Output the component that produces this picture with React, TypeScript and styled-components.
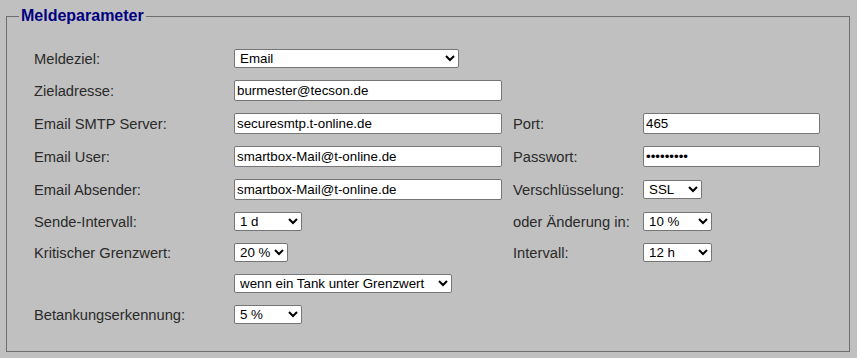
import React from "react";
import styled, { createGlobalStyle } from "styled-components";

const Global = createGlobalStyle`
  html, body { margin: 0; padding: 0; background: #c0c0c0; }
  body { font-family: "Liberation Sans", Arial, sans-serif; }
`;

const Page = styled.div`
  width: 857px;
  height: 358px;
  box-sizing: border-box;
  padding: 7px 7px 0 6px;
  background: #c0c0c0;
`;

const Fieldset = styled.fieldset`
  margin: 0;
  height: 345px;
  box-sizing: border-box;
  border: 1px solid #6e6e6e;
  padding: 18px 0 0 27px;
`;

const Legend = styled.legend`
  margin-left: -15px;
  padding: 0 2px;
  font-size: 16px;
  font-weight: bold;
  color: #000080;
  line-height: 18px;
`;

const Row = styled.div`
  display: grid;
  grid-template-columns: 200px 279px 130px 1fr;
  align-items: center;
  padding: 6px 0;
`;

const Label = styled.span`
  font-size: 14.7px;
  color: #2a2a2a;
  white-space: nowrap;
`;

const TextInput = styled.input<{ $w: number }>`
  width: ${(p) => p.$w}px;
  height: 21px;
  box-sizing: border-box;
  border: 1px solid #767676;
  border-radius: 2px;
  background: #fff;
  padding: 1px 2px;
  font-family: "Liberation Sans", Arial, sans-serif;
  font-size: 13.33px;
  color: #000;
  outline: none;
`;

const Select = styled.select<{ $w: number }>`
  width: ${(p) => p.$w}px;
  height: 19px;
  box-sizing: border-box;
  border: 1px solid #767676;
  border-radius: 2px;
  background: #fff;
  padding: 0 0 0 1px;
  font-family: "Liberation Sans", Arial, sans-serif;
  font-size: 13.33px;
  color: #000;
`;

const Cell = styled.div``;

export default function App() {
  return (
    <>
      <Global />
      <Page>
        <Fieldset>
          <Legend>Meldeparameter</Legend>
          <Row>
            <Label>Meldeziel:</Label>
            <Cell>
              <Select $w={225} defaultValue="Email">
                <option>Email</option>
                <option>SMS</option>
              </Select>
            </Cell>
          </Row>
          <Row>
            <Label>Zieladresse:</Label>
            <Cell>
              <TextInput $w={268} defaultValue="burmester@tecson.de" />
            </Cell>
          </Row>
          <Row>
            <Label>Email SMTP Server:</Label>
            <Cell>
              <TextInput $w={268} defaultValue="securesmtp.t-online.de" />
            </Cell>
            <Label>Port:</Label>
            <Cell>
              <TextInput $w={177} defaultValue="465" />
            </Cell>
          </Row>
          <Row>
            <Label>Email User:</Label>
            <Cell>
              <TextInput $w={268} defaultValue="smartbox-Mail@t-online.de" />
            </Cell>
            <Label>Passwort:</Label>
            <Cell>
              <TextInput $w={177} type="password" defaultValue="secret123" />
            </Cell>
          </Row>
          <Row>
            <Label>Email Absender:</Label>
            <Cell>
              <TextInput $w={268} defaultValue="smartbox-Mail@t-online.de" />
            </Cell>
            <Label>Verschlüsselung:</Label>
            <Cell>
              <Select $w={59} defaultValue="SSL">
                <option>SSL</option>
                <option>TLS</option>
              </Select>
            </Cell>
          </Row>
          <Row>
            <Label>Sende-Intervall:</Label>
            <Cell>
              <Select $w={68} defaultValue="1 d">
                <option>1 d</option>
                <option>12 h</option>
              </Select>
            </Cell>
            <Label>oder Änderung in:</Label>
            <Cell>
              <Select $w={69} defaultValue="10 %">
                <option>10 %</option>
                <option>20 %</option>
              </Select>
            </Cell>
          </Row>
          <Row>
            <Label>Kritischer Grenzwert:</Label>
            <Cell>
              <Select $w={54} defaultValue="20 %">
                <option>10 %</option>
                <option>20 %</option>
              </Select>
            </Cell>
            <Label>Intervall:</Label>
            <Cell>
              <Select $w={69} defaultValue="12 h">
                <option>12 h</option>
                <option>1 d</option>
              </Select>
            </Cell>
          </Row>
          <Row>
            <span />
            <Cell>
              <Select $w={218} defaultValue="wenn ein Tank unter Grenzwert">
                <option>wenn ein Tank unter Grenzwert</option>
                <option>wenn alle Tanks unter Grenzwert</option>
              </Select>
            </Cell>
          </Row>
          <Row>
            <Label>Betankungserkennung:</Label>
            <Cell>
              <Select $w={68} defaultValue="5 %">
                <option>5 %</option>
                <option>10 %</option>
              </Select>
            </Cell>
          </Row>
        </Fieldset>
      </Page>
    </>
  );
}
